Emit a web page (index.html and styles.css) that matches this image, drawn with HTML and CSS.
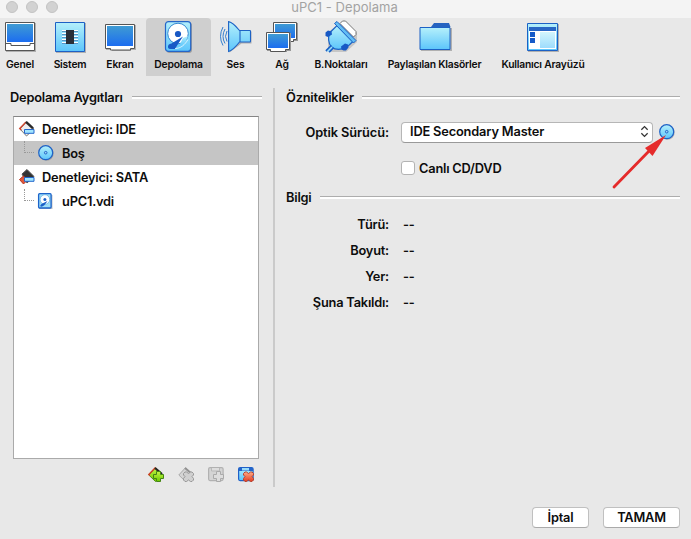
FILE: index.html
```html
<!DOCTYPE html>
<html lang="tr">
<head>
<meta charset="utf-8">
<title>uPC1 - Depolama</title>
<link rel="stylesheet" href="styles.css">
</head>
<body>
<svg class="defs" width="0" height="0" aria-hidden="true">
  <defs>
    <linearGradient id="screen" x1="0" y1="0" x2="0" y2="1"><stop offset="0" stop-color="#3f9bd3"/><stop offset="1" stop-color="#1c6df0"/></linearGradient>
    <linearGradient id="sky" x1="0" y1="0" x2="0" y2="1"><stop offset="0" stop-color="#b5f0fb"/><stop offset="1" stop-color="#5cc5fb"/></linearGradient>
    <linearGradient id="green" x1="0" y1="0" x2="0" y2="1"><stop offset="0" stop-color="#c4f545"/><stop offset="1" stop-color="#6cc900"/></linearGradient>
    <linearGradient id="red" x1="0" y1="0" x2="0" y2="1"><stop offset="0" stop-color="#ffab85"/><stop offset="1" stop-color="#e23d22"/></linearGradient>
    <symbol id="disc" viewBox="0 0 16 16">
      <circle cx="8.5" cy="8.6" r="7.2" fill="#777" opacity=".5"/>
      <circle cx="7.7" cy="7.7" r="7" fill="url(#sky)" stroke="#1f62c6" stroke-width="1.2"/>
      <circle cx="7.7" cy="7.7" r="1.3" fill="#9fd6f5" stroke="#1f62c6" stroke-width="1"/>
    </symbol>
  </defs>
</svg>
<div class="window">
  <header class="titlebar">
    <div class="lights"><i></i><i></i><i></i></div>
    <h1>uPC1 - Depolama</h1>
  </header>
  <nav class="toolbar">
    <a class="tab"><svg viewBox="0 0 32 32"><path d="M2 3h30v29h-30z" fill="#999" opacity=".7"/><path d="M1.5 2.5h29v28h-29z" fill="#fff" stroke="#555"/><path d="M3 4h26v18H3z" fill="url(#screen)"/><path d="M2 23.5h5v2h19v-2h4" fill="none" stroke="#555"/></svg><span>Genel</span></a>
    <a class="tab"><svg viewBox="0 0 32 32"><path d="M2 3h30v30H2z" fill="#999" opacity=".7"/><path d="M1.5 2.5h29v29h-29z" fill="url(#sky)" stroke="#1d60c5"/><path d="M8 10.5h16M8 13.5h16M8 16.5h16M8 19.5h16M8 22.5h16" stroke="#fff"/><path d="M8 11.5h16M8 14.5h16M8 17.5h16M8 20.5h16M8 23.5h16" stroke="#5696c6"/><path d="M12 10h8v14h-8z" fill="#292f38"/></svg><span>Sistem</span></a>
    <a class="tab"><svg viewBox="0 0 32 32"><path d="M2 5h30v25h-5v1H8v-1H2z" fill="#999" opacity=".7"/><path d="M1.5 4.500h29v24h-4v1.500h-20v-1.500h-5z" fill="#fff" stroke="#555"/><path d="M3 6h26v20H3z" fill="url(#screen)"/></svg><span>Ekran</span></a>
    <a class="tab active"><svg viewBox="0 0 32 32"><rect x="3.500" y="2.500" width="25.500" height="30.500" rx="3" fill="#888" opacity=".7"/><rect x="2.500" y="1.600" width="25.200" height="29.800" rx="3" fill="url(#sky)" stroke="#2565c8" stroke-width="1.200"/><circle cx="15" cy="13.500" r="10.300" fill="#fff" stroke="#3488d2"/><path d="M20 18l5-2-3 7-6 3z" fill="url(#sky)"/><circle cx="15" cy="14" r="3.100" fill="#1858c4"/><path d="M20 16.500L8.500 23.500q-4 .5-3.500 4 .5 2 4 1.500h3L15 24z" fill="#1759c6"/><path d="M12 28.500c6 0 10-4 13-9" fill="none" stroke="#fff" stroke-width=".7"/></svg><span>Depolama</span></a>
    <a class="tab"><svg viewBox="0 0 32 32"><path d="M9.500 2.500v30l12-9h10v-12h-10z" fill="#999" opacity=".7"/><path d="M8.600 1.600v30q4.500-1.500 10.900-9.600h10.300q.7 0 .7-.7V11.200q0-.7-.7-.7H19.500Q13 2.500 8.600 1.600zM20 11v11" fill="url(#sky)" stroke="#1d62c5" stroke-width="1.100"/><path d="M7 11q-3 5.500 0 10.500M5 9q-4 7.500 0 14.500M3 7q-5 9.500 0 18.500" fill="none" stroke="#337fcf" stroke-width="1"/></svg><span>Ses</span></a>
    <a class="tab"><svg viewBox="0 0 32 32"><path d="M8 3h24v18h-4v1H8z" fill="#999"/><path d="M7.500 2.500h23v17h-3v2h-20z" fill="#fff" stroke="#555"/><path d="M9 4h20v14H9z" fill="url(#screen)"/><path d="M1 13h24v18h-4v1H5v-1H1z" fill="#999"/><path d="M.5 12.500h23v17h-4v2h-15v-2h-4z" fill="#fff" stroke="#555"/><path d="M2 14h20v14H2z" fill="url(#screen)"/></svg><span>Ağ</span></a>
    <a class="tab"><svg viewBox="0 0 32 32"><path d="M17 2l3-1 12 12v9L21 32 5 32 3 28V12z" fill="#888" opacity=".35"/><path d="M15 3.500L17.500 1h3L31 11.500v3L28.500 17z" fill="#fff" stroke="#777"/><path d="M5 12.500L12 5.500 28 21.500l-6.500 6q-9.500 4-15-.5-5-6-1.500-14.500z" fill="url(#sky)" stroke="#1c62c6" stroke-width="1.200"/><path d="M9.500 3.500l2.500-2 19 19-2.500 2.500z" fill="#62bdf4" stroke="#1c62c6"/><path d="M6.500 25.500L1 31M8.500 27.500L4 32" stroke="#1c62c6" stroke-width="2"/><path d="M7 27L2.500 31.500" stroke="#9be0fb" stroke-width="1.500"/><path d="M.5 12.500l2.500-2 3.500 1 .5 3-4 2.500-2.500-1zM16.500 29.500l-.5-3 4-3 3 1 .500 3-2.500 3h-2.500z" fill="#1759c5"/></svg><span>B.Noktaları</span></a>
    <a class="tab"><svg viewBox="0 0 32 32"><path d="M2 8h31v23H2z" fill="#999" opacity=".7"/><path d="M12 7l3-4h15l1.500 4z" fill="#2663c0"/><path d="M1 7.500h30v22H1z" fill="url(#sky)" stroke="#1c61c5"/></svg><span>Paylaşılan Klasörler</span></a>
    <a class="tab"><svg viewBox="0 0 32 32"><path d="M1 4h31v28H1z" fill="#999" opacity=".7"/><path d="M.5 3.500h30v27H.5z" fill="url(#sky)" stroke="#1c61c5"/><path d="M2 7h27v4H2z" fill="#2766c4"/><path d="M2 11h27v18H2z" fill="#fff"/><path d="M3 12h5v5H3zM3 18h5v5H3z" fill="#165ac8"/><path d="M13 12h15v16H13z" fill="url(#sky)" opacity=".6"/></svg><span>Kullanıcı Arayüzü</span></a>
  </nav>
  <main>
    <section class="devices">
      <h2 class="heading"><span class="h-dev">Depolama Aygıtları</span></h2>
      <ul class="tree">
        <li><svg class="controller" viewBox="0 0 16 16"><path d="M7.500 .8L15 8 7.500 15 1 8z" fill="#eee" stroke="#777"/><path d="M7 1L.8 7.500l1.500 1.500" stroke="#cf4930" stroke-width="1.500" fill="none"/><path d="M7 .8l7 6.500" stroke="#292929" stroke-width="2.400" fill="none"/><path d="M5.500 8.500h9.500v3.800H5.500z" fill="#a2e6ff" stroke="#2467cc"/></svg><span>Denetleyici: IDE</span></li>
        <li class="child selected"><i class="branch"></i><svg><use href="#disc"/></svg><span>Boş</span></li>
        <li><svg class="controller" viewBox="0 0 16 16"><path d="M8 0.500L15 7.500 8 14 3 5z" fill="#333" stroke="#555"/><path d="M.5 10.500l4-3.500 4 4-4 4z" fill="#df593b" stroke="#ba3421"/><path d="M5.500 8.500h9.500v3.800H5.500z" fill="#a2e6ff" stroke="#2467cc"/></svg><span>Denetleyici: SATA</span></li>
        <li class="child"><i class="branch"></i><svg viewBox="0 0 16 16"><path d="M1 2h13.500v14H1z" fill="#888" opacity=".5"/><rect x=".6" y=".7" width="12.500" height="14.300" rx="1" fill="#9eddf7" stroke="#1d64cb" stroke-width="1.300"/><circle cx="6.900" cy="6.500" r="4.800" fill="#fff" stroke="#57a9df" stroke-width=".7"/><circle cx="6.900" cy="6.500" r="1.500" fill="#1b61c8"/><path d="M9.500 8L3.500 11q-2 1.500-1 2.500 3 1 7-5.500z" fill="#195fc8"/></svg><span>uPC1.vdi</span></li>
      </ul>
      <div class="actions">
        <svg viewBox="0 0 16 16"><path d="M7.500.700L15 8l-7.500 6.500L.8 8z" fill="url(#green)" stroke="#508b15"/><path d="M7.500.500L.8 7.500l1 1" fill="none" stroke="#ce4225" stroke-width="1.400"/><path d="M7 1l7 6" stroke="#272727" stroke-width="2.200"/><path d="M8.500 4.500h4v3h3v4h-3v3h-4v-3h-3v-4h3z" fill="url(#green)" stroke="#448514"/></svg>
        <svg viewBox="0 0 16 16"><path d="M7.500.700L15 8l-7.500 6.500L.8 8z" fill="#d4d4d4" stroke="#aaa"/><path d="M7 1l7 6" stroke="#929292" stroke-width="2"/><path d="M7 5l1.500 0 2 1.500 2-1.500H14l1.500 1.500v1.500L14 9.500l1.500 2v1.500L14 14.500h-1.500l-2-1.500-2 1.500H7L5.500 13v-1.500L7 9.500 5.500 8V6.500z" fill="#d0d0d0" stroke="#999"/></svg>
        <svg viewBox="0 0 16 16"><rect x=".6" y=".6" width="14.500" height="13" rx="1.500" fill="#d4d4d4" stroke="#b1b1b1" stroke-width="1.200"/><path d="M3.500 1v3h8V1" fill="#ddd" stroke="#b9b9b9"/><path d="M8.500 4.500h4v3h3v4h-3v3h-4v-3h-3v-4h3z" fill="#ddd" stroke="#aaa"/></svg>
        <svg viewBox="0 0 16 16"><rect x=".6" y=".6" width="14.500" height="13" rx="1.500" fill="url(#sky)" stroke="#1e60c8" stroke-width="1.200"/><path d="M1 1h14v3H1z" fill="#2565ca"/><path d="M4 1h7v2.500H4z" fill="#99dbfa"/><path d="M7 5l1.500 0 2 1.500 2-1.500H14l1.500 1.500v1.500L14 9.500l1.500 2v1.500L14 14.500h-1.500l-2-1.500-2 1.500H7L5.500 13v-1.500L7 9.500 5.500 8V6.500z" fill="url(#red)" stroke="#b74330"/></svg>
      </div>
    </section>
    <section class="attributes">
      <h2 class="heading"><span class="h-attr">Öznitelikler</span></h2>
      <div class="drive">
        <label>Optik Sürücü:</label>
        <div class="select"><span>IDE Secondary Master</span><svg viewBox="0 0 10 16"><path d="M1.500 6L5 2.500 8.500 6M1.500 10L5 13.500 8.500 10" fill="none" stroke="#333" stroke-width="1.400"/></svg></div>
        <div class="pick"><svg class="disc"><use href="#disc"/></svg><svg class="arrow" viewBox="0 0 56 56"><path d="M2 52L38 15" stroke="#e52b2b" stroke-width="2.800" stroke-linecap="round"/><path d="M54 0L33 13l7.500 8z" fill="#e52b2b"/></svg></div>
      </div>
      <div class="live"><i></i><span>Canlı CD/DVD</span></div>
      <h2 class="heading info-heading"><span class="h-info">Bilgi</span></h2>
      <dl>
        <dt>Türü:</dt><dd>--</dd>
        <dt>Boyut:</dt><dd>--</dd>
        <dt>Yer:</dt><dd>--</dd>
        <dt>Şuna Takıldı:</dt><dd>--</dd>
      </dl>
    </section>
  </main>
  <footer><button class="cancel">İptal</button><button class="ok">TAMAM</button></footer>
</div>
</body>
</html>
```
FILE: styles.css
```css
* { box-sizing: border-box; }
body { margin: 0; background: #e8e8e8; color: #0d0d0d; font: 600 12.8px/16px Inter, "Liberation Sans", sans-serif; letter-spacing: -.2px; }
h1, h2, ul, dl, dd { margin: 0; padding: 0; font: inherit; }
svg { display: block; flex: none; overflow: visible; }
.defs { position: absolute; }
.window { display: flex; flex-direction: column; width: 691px; height: 539px; overflow: hidden; }
.titlebar { display: grid; grid-template: 18px / 1fr; flex: none; background: #f4f4f4; }
.titlebar > * { grid-area: 1 / 1; }
.titlebar h1 { padding-right: 2px; font-size: 13px; font-weight: 400; letter-spacing: .05px; color: #a3a3a3; text-align: center; line-height: 15px; }
.lights { display: flex; gap: 8px; padding-left: 6px; }
.lights i { width: 12px; height: 12px; margin-top: 1px; border: 1px solid #c3c3c3; border-radius: 50%; background: #d2d2d2; }
.toolbar { display: grid; grid-template-columns: 40px 60px 46px 65px 49px 44px 74px 113px 104px; flex: none; height: 58px; }
.tab { display: flex; flex-direction: column; align-items: center; padding-top: 2px; font-size: 10.3px; letter-spacing: -.2px; white-space: nowrap; }
.tab:nth-child(3) { padding-right: 6px; }
.tab svg { width: 32px; height: 32px; }
.tab span { margin-top: 4px; }
.active { background: #cfcfcf; border-radius: 4px 4px 0 0; }
main { display: grid; grid-template-columns: 275px 1fr; height: 399px; margin-top: 12px; flex: none; }
.devices { border-right: 2px solid #cacaca; padding: 0 11px 0 10px; }
.heading { display: flex; align-items: center; height: 18px; }
.heading span { flex: none; padding-top: 2px; }
.heading::after { content: ""; flex: 1; height: 2px; border-top: 1px solid #adadad; background: #fff; }
.h-dev { width: 122px; }
.h-attr { width: 76px; }
.h-info { width: 34px; }
.tree { list-style: none; width: 246px; height: 343px; margin: 10px 0 0 3px; border: 1px solid #aaa; border-top-color: #858585; background: #fff; }
.tree li { display: flex; align-items: center; height: 24px; padding-left: 5px; }
.tree li span { padding-top: 1px; }
.tree li svg { width: 16px; height: 16px; margin-right: 7px; }
.tree li.child { padding-left: 10px; }
.tree li.child svg { margin-left: 4px; margin-right: 8px; }
.tree li.selected { background: #c5c5c5; }
.branch { width: 10px; height: 12px; margin-top: -12px; border-left: 1px dotted #999; border-bottom: 1px dotted #999; }
.actions { display: flex; gap: 14px; margin: 8px 0 0 138px; }
.actions svg { width: 16px; height: 16px; }
.attributes { padding: 0 11px 0 11px; }
.drive { display: flex; align-items: center; height: 22px; margin-top: 15px; }
.drive label { width: 103px; text-align: right; padding-top: 2px; letter-spacing: -.08px; white-space: nowrap; }
.select { display: flex; justify-content: space-between; align-items: center; width: 252px; height: 21px; margin-left: 12px; padding: 0 3px 1px 8px; border: 1px solid #b6b6b6; border-bottom-color: #999; border-radius: 4px; background: #fff; }
.select span { letter-spacing: -.16px; }
.select svg { width: 9px; height: 15px; }
.pick { position: relative; width: 16px; height: 16px; margin-left: 6px; }
.disc { width: 16px; height: 16px; }
.arrow { position: absolute; left: -47px; top: 11px; width: 56px; height: 56px; }
.live { display: flex; align-items: center; gap: 4px; height: 16px; margin: 17px 0 0 115px; }
.live i { width: 14px; height: 14px; border: 1px solid #b3b3b3; border-radius: 3px; background: #fff; }
.live span { padding-top: 1px; }
.info-heading { margin-top: 12px; }
dl { display: grid; grid-template-columns: 103px 1fr; grid-auto-rows: 26px; column-gap: 14px; line-height: 26px; margin-top: 6px; }
dt { text-align: right; }
footer { display: flex; justify-content: flex-end; gap: 14px; padding: 20px 11px 0 0; }
button { height: 21px; padding: 0; border: 1px solid #c0c0c0; border-bottom-color: #aaa; border-radius: 4px; background: #fff; color: inherit; font: inherit; letter-spacing: inherit; }
.cancel { width: 57px; }
.ok { width: 77px; }
```
